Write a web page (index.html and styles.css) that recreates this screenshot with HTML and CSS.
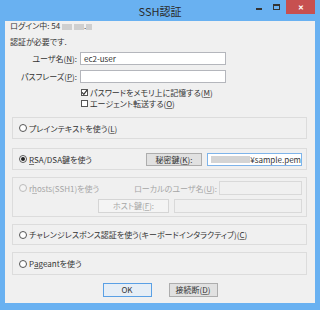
FILE: index.html
```html
<!DOCTYPE html>
<html lang="ja">
<head>
  <meta charset="UTF-8">
  <title>SSH認証</title>
  <link rel="stylesheet" href="styles.css">
</head>
<body>
  <div class="window">
    <div class="titlebar">
      <div></div>
      <div class="title">SSH認証</div>
      <div class="controls">
        <span class="ctl_min"></span>
        <span class="ctl_max"></span>
        <span class="ctl_close">&#x2715;</span>
      </div>
    </div>

    <div class="client">
      <div class="line line_login">ログイン中: 54 <span class="blur b1"></span><span class="blur b2"></span>.<span class="blur b3"></span></div>
      <div class="line line_need">認証が必要です.</div>

      <div class="field field_user">
        <span class="field_label">ユーザ名(<u>N</u>):</span>
        <div class="input">ec2-user</div>
      </div>
      <div class="field field_pass">
        <span class="field_label">パスフレーズ(<u>P</u>):</span>
        <div class="input"></div>
      </div>

      <div class="check check_mem">
        <span class="box">
          <svg width="7" height="7" viewBox="0 0 7 7"><path d="M1 3.4 L2.8 5.3 L6 1.2" fill="none" stroke="#333" stroke-width="1.2"/></svg>
        </span>
        パスワードをメモリ上に記憶する(<u>M</u>)
      </div>
      <div class="check check_agent">
        <span class="box"></span>
        エージェント転送する(<u>O</u>)
      </div>

      <div class="group g_plain">
        <span class="radio"></span>プレインテキストを使う(<u>L</u>)
      </div>

      <div class="group g_rsa">
        <span class="radio on"></span><u>R</u>SA/DSA鍵を使う
        <div class="btn btn_key">秘密鍵(<u>K</u>):</div>
        <div class="input input_key focus"><span class="blur b4"></span>¥sample.pem</div>
      </div>

      <div class="group g_rhosts disabled">
        <div class="rh_row">
          <span class="radio"></span>r<u>h</u>osts(SSH1)を使う
          <span class="local_label">ローカルのユーザ名(<u>U</u>):</span>
          <div class="input input_local"></div>
        </div>
        <div class="rh_row rh_row2">
          <div class="btn btn_host">ホスト鍵(<u>F</u>):</div>
          <div class="input input_host"></div>
        </div>
      </div>

      <div class="group g_chal">
        <span class="radio"></span>チャレンジレスポンス認証を使う(キーボードインタラクティブ)(<u>C</u>)
      </div>

      <div class="group g_pageant">
        <span class="radio"></span>P<u>a</u>geantを使う
      </div>

      <div class="buttons">
        <div class="btn btn_ok">OK</div>
        <div class="btn">接続断(<u>D</u>)</div>
      </div>
    </div>
  </div>
</body>
</html>
```

FILE: styles.css
```css
* {
  box-sizing: border-box;
  font-family: "Noto Sans CJK JP", "Noto Sans", sans-serif;
  font-feature-settings: "palt";
}

body {
  margin: 0;
}

u {
  text-decoration-thickness: 1px;
  text-underline-offset: 1px;
  text-decoration-color: #777;
}

.window {
  width: 320px;
  height: 310px;
  background: #69b1f1;
  display: flex;
  flex-direction: column;
}

.titlebar {
  height: 21px;
  display: grid;
  grid-template-columns: 1fr auto 1fr;
}

.title {
  font-size: 11px;
  line-height: 21px;
  padding-top: 1px;
  color: #2a2a2a;
}

.controls {
  display: flex;
  justify-content: flex-end;
  align-items: flex-start;
  padding-right: 5px;
}

.ctl_min {
  width: 6px;
  height: 2px;
  margin-top: 8px;
  margin-right: 11px;
  background: #333;
}

.ctl_max {
  width: 7px;
  height: 6px;
  margin-top: 4px;
  margin-right: 6px;
  border: 1px solid #333;
  border-top-width: 2px;
}

.ctl_close {
  width: 29px;
  height: 14px;
  background: #c75050;
  color: #fff;
  font-size: 7px;
  font-weight: bold;
  line-height: 14px;
  text-align: center;
}

.client {
  margin: 0 5px 7px;
  height: 282px;
  background: #f0f0f0;
  font-size: 8px;
  color: #333;
  display: flex;
  flex-direction: column;
}

.line {
  height: 10px;
  line-height: 10px;
  padding-left: 5px;
}

.line_need {
  margin-top: 6px;
}

.blur {
  display: inline-block;
  height: 6px;
  background: #cfcfcf;
  vertical-align: -0.5px;
  filter: blur(0.4px);
}

.b1 { width: 10px; margin-right: 2px; }
.b2 { width: 10px; }
.b3 { width: 6px; }
.b4 { width: 44px; height: 7px; background: #d4d4d4; }

.field {
  display: flex;
  align-items: center;
  height: 13px;
  margin-top: 5px;
}

.field_label {
  width: 72px;
  text-align: right;
  margin-right: 3px;
}

.input {
  height: 13px;
  background: #fff;
  border: 1px solid #b4b6bc;
  line-height: 11px;
  padding-left: 3px;
  white-space: nowrap;
  overflow: hidden;
}

.field .input {
  width: 146px;
}

.check {
  display: flex;
  align-items: center;
  height: 10px;
  padding-left: 76px;
}

.check_mem {
  margin-top: 4px;
}

.check_agent {
  margin-top: 1px;
}

.box {
  width: 7px;
  height: 7px;
  border: 1px solid #555;
  background: #fff;
  margin-right: 2px;
  display: flex;
  align-items: center;
  justify-content: center;
}

.box svg {
  flex: none;
}

.group {
  margin-left: 7px;
  width: 295px;
  border: 1px solid #dcdcdc;
  display: flex;
  align-items: center;
  padding-left: 6px;
  padding-right: 4px;
}

.g_plain {
  margin-top: 9px;
  height: 22px;
}

.g_rsa {
  margin-top: 9px;
  height: 22px;
}

.g_rhosts {
  margin-top: 7px;
  height: 40px;
  flex-direction: column;
  align-items: stretch;
  padding-top: 3px;
  gap: 4px;
}

.g_chal {
  margin-top: 7px;
  height: 21px;
}

.g_pageant {
  margin-top: 7px;
  height: 23px;
}

.radio {
  width: 8px;
  height: 8px;
  border: 1px solid #555;
  border-radius: 50%;
  background: #fff;
  margin-right: 2px;
  display: flex;
  align-items: center;
  justify-content: center;
}

.radio.on::after {
  content: "";
  width: 4px;
  height: 4px;
  border-radius: 50%;
  background: #222;
}

.btn {
  height: 13px;
  background: #e1e1e1;
  border: 1px solid #adadad;
  line-height: 11px;
  text-align: center;
}

.btn_key {
  margin-left: auto;
  width: 56px;
  margin-right: 5px;
}

.input_key {
  width: 95px;
  padding-left: 3px;
  display: flex;
  align-items: center;
}

.input.focus {
  border-color: #7eb4ea;
}

.rh_row {
  display: flex;
  align-items: center;
  height: 14px;
}

.rh_row2 {
  justify-content: flex-end;
  gap: 5px;
}

.local_label {
  margin-left: auto;
  margin-right: 2px;
}

.input_local {
  width: 83px;
  height: 14px;
}

.btn_host {
  width: 71px;
  height: 14px;
}

.input_host {
  width: 128px;
  height: 14px;
}

.disabled {
  color: #a6a6a6;
}

.disabled u {
  text-decoration-color: #bbb;
}

.disabled .radio {
  border-color: #bcbcbc;
  background: #f4f4f4;
}

.disabled .input {
  background: #f0f0f0;
  border-color: #d9d9d9;
}

.disabled .btn {
  background: #f4f4f4;
  border-color: #d5d5d5;
}

.buttons {
  margin-top: 8px;
  display: flex;
  justify-content: center;
  gap: 17px;
}

.buttons .btn {
  width: 49px;
  height: 14px;
  line-height: 12px;
}

.btn_ok {
  border-color: #5aa0e5;
  background: #e6eef6;
}
```
